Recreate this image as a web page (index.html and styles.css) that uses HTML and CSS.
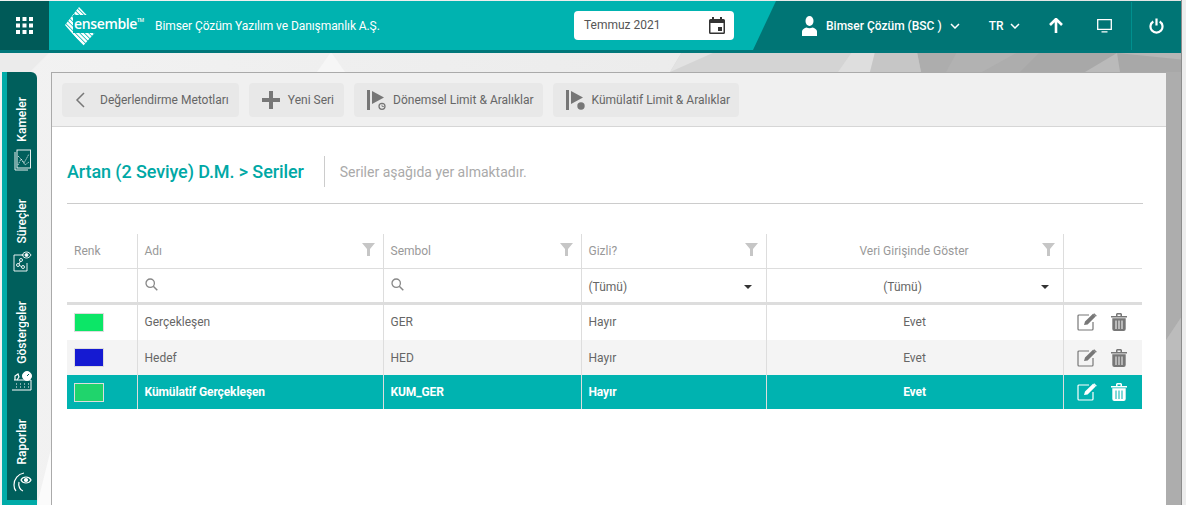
FILE: index.html
```html
<!DOCTYPE html>
<html lang="tr">
<head>
<meta charset="utf-8">
<title>Seriler</title>
<link rel="stylesheet" href="styles.css">
</head>
<body>
<svg class="backdrop" viewBox="0 0 1186 505" preserveAspectRatio="none" aria-hidden="true">
  <defs><linearGradient id="bg" x1="0" x2="1"><stop offset="0" stop-color="#f2f2f2"/><stop offset=".56" stop-color="#ececec"/><stop offset="1" stop-color="#e4e4e4"/></linearGradient></defs>
  <rect width="1186" height="505" fill="url(#bg)"/>
  <polygon points="0,52 50,52 30,72 0,72" fill="#ebebeb"/>
  <polygon points="331,52 345,72 317,72" fill="#f6f6f6"/>
  <polygon points="682,52 1186,52 1186,505 1166,505 1166,72 670,72" fill="#d4d4d4"/>
  <polygon points="682,52 715,52 670,72" fill="#e2e2e2"/>
  <polygon points="852,52 875,52 870,72 838,72" fill="#dedede"/>
  <polygon points="875,52 917,52 921,72 870,72" fill="#c6c6c6"/>
  <polygon points="917,52 1186,52 1186,505 1166,505 1166,72 921,72" fill="#adadad"/>
  <polygon points="957,52 1018,52 982,72 946,72" fill="#b2b2b2"/>
  <polygon points="1040,52 1186,52 1186,72 1020,72" fill="#a8a8a8"/>
  <polygon points="1117,53 1120,72 1085,72" fill="#bababa"/>
  <polygon points="1117,53 1186,60 1186,52 1117,52" fill="#b6b6b6"/>
  <polygon points="1166,340 1186,310 1186,360 1166,360" fill="#bcbcbc"/>
  <polygon points="37,505 52,445 52,505" fill="#fbfbfb"/>
</svg>

<header class="topbar">
  <button class="apps" aria-label="Uygulamalar">
    <svg width="17" height="17" viewBox="0 0 17 17" fill="#fff"><rect width="4" height="4"/><rect x="6.500" width="4" height="4"/><rect x="13" width="4" height="4"/><rect y="6.500" width="4" height="4"/><rect x="6.500" y="6.500" width="4" height="4"/><rect x="13" y="6.500" width="4" height="4"/><rect y="13" width="4" height="4"/><rect x="6.500" y="13" width="4" height="4"/><rect x="13" y="13" width="4" height="4"/></svg>
  </button>
  <div class="brand">
    <div class="logo">
      <svg class="logo-mark" width="48" height="44" viewBox="0 0 48 44" aria-hidden="true">
        <defs><clipPath id="dia"><polygon points="2,21 16,3 36,24 20,42"/></clipPath></defs>
        <g clip-path="url(#dia)" stroke="#fff" stroke-width="2.400" fill="none">
          <path d="M-19 0L31 50M-14.500 0L35.500 50M-10 0L40 50M-5.500 0L44.500 50M-1 0L49 50M3.500 0L53.500 50M8 0L58 50M12.500 0L62.500 50"/>
        </g>
      </svg>
      <span class="logo-word">ensemble<sup>TM</sup></span>
    </div>
    <span class="company">Bimser Çözüm Yazılım ve Danışmanlık A.Ş.</span>
    <div class="date-box">
      <span>Temmuz 2021</span>
      <svg width="16" height="17" viewBox="0 0 16 17"><path fill-rule="evenodd" d="M3 0h2v2h6V0h2v2h1.500A1.500 1.500 0 0 1 16 3.500V15.500A1.500 1.500 0 0 1 14.500 17H1.500A1.500 1.500 0 0 1 0 15.500V3.500A1.500 1.500 0 0 1 1.500 2H3zM1.500 6v9.500h13V6z" fill="#333"/><rect x="9" y="10" width="4" height="4" fill="#333"/></svg>
    </div>
  </div>
  <div class="user-area">
    <div class="nav-item user">
      <svg width="15" height="20" viewBox="0 0 15 20" fill="#fff"><ellipse cx="7.500" cy="5" rx="4" ry="5"/><path d="M0 20v-4.500c0-2 2.500-3.500 4.500-4 1.800 1 4.200 1 6 0 2 .5 4.500 2 4.500 4V20z"/></svg>
      <span>Bimser Çözüm (BSC )</span>
      <svg class="chev" width="10" height="6" viewBox="0 0 10 6"><path d="M1 1l4 4 4-4" fill="none" stroke="#fff" stroke-width="1.500"/></svg>
    </div>
    <div class="nav-item lang">
      <span>TR</span>
      <svg class="chev" width="10" height="6" viewBox="0 0 10 6"><path d="M1 1l4 4 4-4" fill="none" stroke="#fff" stroke-width="1.500"/></svg>
    </div>
    <svg class="up" width="14" height="15" viewBox="0 0 14 15"><path d="M7 1v14M1 7l6-6 6 6" fill="none" stroke="#fff" stroke-width="2.600"/></svg>
    <svg class="monitor" width="15" height="14" viewBox="0 0 15 14"><path d="M.7.700h13.600v9.600H.7zM4.500 12.800h6" fill="none" stroke="#fff" stroke-width="1.300"/></svg>
    <div class="power">
      <svg width="15" height="16" viewBox="0 0 15 16"><path d="M4.300 3.500a6 6 0 1 0 6.400 0M7.500 0.500v7" fill="none" stroke="#fff" stroke-width="2.200"/></svg>
    </div>
  </div>
</header>

<div class="stage">
  <nav class="sidetabs">
    <a class="tab tab-a"><span>Kameler</span>
      <svg width="17" height="22" viewBox="0 0 17 22" fill="none" stroke="#fff" stroke-width=".9"><rect x="3" y="1" width="13.500" height="18"/><path d="M1 3v18h13"/><path d="M4 16l3-6 3 4 5-9M4 7l4 4 3 5 4-3" stroke-width=".7" stroke-dasharray="1.500 .7"/></svg>
    </a>
    <a class="tab tab-b"><span>Süreçler</span>
      <svg width="19" height="21" viewBox="0 0 19 21" fill="none" stroke="#fff" stroke-width=".9"><path d="M11 4H1v16h13v-8"/><circle cx="5" cy="14" r="1.500"/><circle cx="10" cy="16" r="1.500"/><circle cx="8" cy="9" r="1.500"/><path d="M6 13l1.500-3M6.500 14.500l2 1"/><path d="M9 4c2-4 7-4 9 0-2 4-7 4-9 0z"/><circle cx="13.500" cy="4" r="1.500" fill="#fff"/></svg>
    </a>
    <a class="tab tab-c"><span>Göstergeler</span>
      <svg width="22" height="20" viewBox="0 0 22 20" fill="none" stroke="#fff" stroke-width="1"><path d="M3 9h17v10H1"/><path d="M5 13h1M9 13h1M13 13h1M17 13h1M5 16h1M9 16h1M13 16h1M17 16h1" stroke-width="1.200"/><circle cx="16" cy="5" r="4.500" fill="#fff"/><path d="M16 5l2-2" stroke="#005f5c"/><path d="M4 9V5l3-2 1 3-2 3" stroke-width="1.200"/></svg>
    </a>
    <a class="tab tab-d"><span>Raporlar</span>
      <svg width="19" height="20" viewBox="0 0 19 20" fill="none" stroke="#fff" stroke-width="1.200"><path d="M11 1C5 2 1 7 1 13c0 3 1 5 2 6M10 19c-3-1-5-5-4-9"/><path d="M8 8c2-4 8-4 10 0-2 4-8 4-10 0z"/><circle cx="13" cy="8" r="1.500" fill="#fff"/></svg>
    </a>
  </nav>

  <main class="panel">
    <div class="toolbar">
      <button class="tool tool-back">
        <svg class="tool-ico back" width="10" height="16" viewBox="0 0 10 16"><path d="M9 1L2 8l7 7" fill="none" stroke="#777" stroke-width="1.500"/></svg>
        <span>Değerlendirme Metotları</span>
      </button>
      <button class="tool tool-new">
        <svg width="18" height="18" viewBox="0 0 18 18"><path d="M0 7h7V0h4v7h7v4h-7v7H7v-7H0z" fill="#777"/></svg>
        <span>Yeni Seri</span>
      </button>
      <button class="tool tool-flag">
        <svg width="20" height="20" viewBox="0 0 20 20" fill="#777"><rect width="3" height="20"/><path d="M5 1l12 6.500L5 14z"/><circle cx="15" cy="16.300" r="3" fill="none" stroke="#777" stroke-width="1.300"/><path d="M15 14.500v2h2" fill="none" stroke="#777" stroke-width=".8"/></svg>
        <span>Dönemsel Limit &amp; Aralıklar</span>
      </button>
      <button class="tool tool-flag">
        <svg width="20" height="20" viewBox="0 0 20 20" fill="#777"><rect width="3" height="20"/><path d="M5 1l12 6.500L5 14z"/><circle cx="15" cy="16" r="3.700"/></svg>
        <span>Kümülatif Limit &amp; Aralıklar</span>
      </button>
    </div>

    <div class="content">
      <div class="heading">
        <h1>Artan (2 Seviye) D.M. &gt; Seriler</h1>
        <p>Seriler aşağıda yer almaktadır.</p>
      </div>

      <table class="grid">
        <colgroup>
          <col class="c-color"><col class="c-name"><col class="c-sym"><col class="c-hid"><col class="c-show"><col class="c-act">
        </colgroup>
        <thead>
          <tr class="head">
            <th>Renk</th>
            <th><div class="th-in">Adı<svg class="funnel" viewBox="0 0 13 13"><path d="M0 0h13L8 6v7H5V6z"/></svg></div></th>
            <th><div class="th-in">Sembol<svg class="funnel" viewBox="0 0 13 13"><path d="M0 0h13L8 6v7H5V6z"/></svg></div></th>
            <th><div class="th-in">Gizli?<svg class="funnel" viewBox="0 0 13 13"><path d="M0 0h13L8 6v7H5V6z"/></svg></div></th>
            <th class="center"><div class="th-in th-center">Veri Girişinde Göster<svg class="funnel" viewBox="0 0 13 13"><path d="M0 0h13L8 6v7H5V6z"/></svg></div></th>
            <th></th>
          </tr>
          <tr class="filter">
            <td></td>
            <td><svg class="search" width="13" height="13" viewBox="0 0 13 13"><circle cx="5.200" cy="5.200" r="4.200" fill="none" stroke="#888" stroke-width="1.300"/><path d="M8.300 8.300l4 4" stroke="#888" stroke-width="1.500"/></svg></td>
            <td><svg class="search" width="13" height="13" viewBox="0 0 13 13"><circle cx="5.200" cy="5.200" r="4.200" fill="none" stroke="#888" stroke-width="1.300"/><path d="M8.300 8.300l4 4" stroke="#888" stroke-width="1.500"/></svg></td>
            <td><div class="select">(Tümü)<i class="caret"></i></div></td>
            <td><div class="select select-c"><span>(Tümü)</span><i class="caret"></i></div></td>
            <td></td>
          </tr>
        </thead>
        <tbody>
          <tr class="r1">
            <td><i class="swatch s-green"></i></td><td>Gerçekleşen</td><td>GER</td><td>Hayır</td><td class="center">Evet</td>
            <td class="actions">
              <svg class="act" width="21" height="18" viewBox="0 0 21 18"><path d="M12 2H2a1 1 0 0 0-1 1v13a1 1 0 0 0 1 1h13a1 1 0 0 0 1-1V9" fill="none" stroke="currentColor" stroke-width="1.200"/><path d="M7 12l1-3.500L16 .8l2.600 2.600-8 8z M17.200.2l2.600 2.600-.8.8-2.600-2.600z" fill="currentColor"/></svg>
              <svg class="act" width="16" height="18" viewBox="0 0 16 18"><path d="M0 3h16v1.600H0zM5 3V1l1-1h4l1 1v2H9.500V1.500h-3V3zM1.300 5.200h13.400V16a2 2 0 0 1-2 2H3.300a2 2 0 0 1-2-2zM4.500 7.500V16h1V7.500zM7.500 7.500V16h1V7.500zM10.500 7.500V16h1V7.500z" fill="currentColor" fill-rule="evenodd"/></svg>
            </td>
          </tr>
          <tr class="alt">
            <td><i class="swatch s-blue"></i></td><td>Hedef</td><td>HED</td><td>Hayır</td><td class="center">Evet</td>
            <td class="actions">
              <svg class="act" width="21" height="18" viewBox="0 0 21 18"><path d="M12 2H2a1 1 0 0 0-1 1v13a1 1 0 0 0 1 1h13a1 1 0 0 0 1-1V9" fill="none" stroke="currentColor" stroke-width="1.200"/><path d="M7 12l1-3.500L16 .8l2.600 2.600-8 8z M17.200.2l2.600 2.600-.8.8-2.600-2.600z" fill="currentColor"/></svg>
              <svg class="act" width="16" height="18" viewBox="0 0 16 18"><path d="M0 3h16v1.600H0zM5 3V1l1-1h4l1 1v2H9.500V1.500h-3V3zM1.300 5.200h13.400V16a2 2 0 0 1-2 2H3.300a2 2 0 0 1-2-2zM4.500 7.500V16h1V7.500zM7.500 7.500V16h1V7.500zM10.500 7.500V16h1V7.500z" fill="currentColor" fill-rule="evenodd"/></svg>
            </td>
          </tr>
          <tr class="selected">
            <td><i class="swatch s-lime"></i></td><td>Kümülatif Gerçekleşen</td><td>KUM_GER</td><td>Hayır</td><td class="center">Evet</td>
            <td class="actions">
              <svg class="act" width="21" height="18" viewBox="0 0 21 18"><path d="M12 2H2a1 1 0 0 0-1 1v13a1 1 0 0 0 1 1h13a1 1 0 0 0 1-1V9" fill="none" stroke="currentColor" stroke-width="1.200"/><path d="M7 12l1-3.500L16 .8l2.600 2.600-8 8z M17.200.2l2.600 2.600-.8.8-2.600-2.600z" fill="currentColor"/></svg>
              <svg class="act" width="16" height="18" viewBox="0 0 16 18"><path d="M0 3h16v1.600H0zM5 3V1l1-1h4l1 1v2H9.500V1.500h-3V3zM1.300 5.200h13.400V16a2 2 0 0 1-2 2H3.300a2 2 0 0 1-2-2zM4.500 7.500V16h1V7.500zM7.500 7.500V16h1V7.500zM10.500 7.500V16h1V7.500z" fill="currentColor" fill-rule="evenodd"/></svg>
            </td>
          </tr>
        </tbody>
      </table>
    </div>
  </main>
</div>
<div class="edge"></div>
</body>
</html>
```

FILE: styles.css
```css
* { box-sizing: border-box; }
html, body { height: 100%; }
body {
  margin: 0;
  height: 505px;
  overflow: hidden;
  font-family: Roboto, "Liberation Sans", sans-serif;
  font-size: 12px;
  color: #666;
  position: relative;
}
.backdrop { position: absolute; inset: 0; width: 100%; height: 100%; z-index: -1; }
.edge {
  position: absolute;
  top: 0;
  right: 0;
  bottom: 0;
  width: 5px;
  background: #ededed;
  border-left: 1px solid #8c8c8c;
}

/* top bar */
.topbar {
  display: flex;
  height: 52px;
  margin-top: 1px;
  border-bottom: 3px solid #00777a;
  background: #007575;
  color: #fff;
}
.apps {
  flex: 0 0 49px;
  border: 0;
  padding: 0;
  background: #005a58;
  display: flex;
  align-items: center;
  justify-content: center;
}
.brand {
  flex: 0 0 727px;
  display: flex;
  align-items: center;
  background: #00b3b0;
  clip-path: polygon(0 0, 100% 0, 704px 100%, 0 100%);
  padding-left: 14px;
}
.logo { position: relative; width: 79px; height: 48px; flex: none; }
.logo-mark { position: absolute; left: 0; top: 2px; }
.logo-word {
  position: absolute;
  left: 10px;
  top: 13px;
  font-family: "Open Sans", sans-serif;
  font-size: 14px;
  font-weight: 600;
  letter-spacing: -.35px;
  color: #fff;
  background: #00b3b0;
  padding: 0 1px;
  line-height: 18px;
  white-space: nowrap;
}
.logo-word sup { font-size: 5px; vertical-align: 7px; line-height: 0; }
.company { margin-left: 13px; width: 419px; font-size: 12px; letter-spacing: -.08px; color: #fff; white-space: nowrap; }
.date-box {
  width: 160px;
  height: 29px;
  margin-top: -1px;
  background: #fff;
  border-radius: 4px;
  color: #555;
  display: flex;
  align-items: center;
  justify-content: space-between;
  padding: 0 9px 0 10px;
  font-size: 12px;
}
.user-area { flex: 1; display: flex; align-items: center; position: relative; padding-left: 26px; }
.nav-item { display: flex; align-items: center; font-weight: 500; font-size: 12px; }
.user span { margin-left: 9px; }
.user .chev { margin-left: 8px; }
.lang { margin-left: 29px; }
.lang .chev { margin-left: 6px; }
.up { margin-left: 29px; }
.monitor { margin-left: 34px; }
.power {
  margin-left: 19px;
  width: 50px;
  height: 48px;
  border-left: 1px solid #00908e;
  display: flex;
  align-items: center;
  justify-content: center;
}

/* stage */
.stage { display: flex; height: 452px; padding-top: 19px; }
.sidetabs {
  flex: 0 0 35px;
  margin-left: 2px;
  background: #005f5c;
  border-left: 5px solid #00aba8;
  border-top-right-radius: 6px;
  display: flex;
  flex-direction: column;
  height: 433px;
  position: relative;
}
.sidetabs::after {
  content: "";
  position: absolute;
  left: -5px;
  right: 0;
  bottom: 0;
  height: 5px;
  background: #00aba8;
}
.tab {
  display: flex;
  flex-direction: column;
  align-items: center;
  color: #fff;
  font-weight: 500;
  font-size: 12px;
}
.tab span { writing-mode: vertical-rl; transform: rotate(180deg); line-height: 14px; }
.tab svg { margin-top: 7px; }
.tab-a { margin-top: 25px; height: 100px; }
.tab-b { margin-top: 2px; height: 100px; }
.tab-c { margin-top: 2px; height: 118px; }
.tab-d { margin-top: 0; }
.panel {
  width: 1115px;
  margin-left: 14px;
  height: 433px;
  background: #fff;
  border-top: 1px solid #aaa;
  border-left: 1px solid #aaa;
}

/* toolbar */
.toolbar {
  height: 54px;
  display: flex;
  align-items: center;
  gap: 10px;
  padding: 0 0 0 10px;
  background: #f0f0f0;
  border-bottom: 1px solid #d6d6d6;
}
.tool {
  height: 34px;
  border: 0;
  border-radius: 4px;
  background: #e8e8e8;
  color: #666;
  font: 12px Roboto, sans-serif;
  display: flex;
  align-items: center;
  padding: 0 10px 0 13px;
  white-space: nowrap;
}
.tool .back { margin-right: 15px; }
.tool-new svg { margin-right: 8px; }
.tool-flag { padding-right: 9px; }
.tool-flag svg { margin-right: 6px; }

/* content */
.content { padding: 29px 23px 0 15px; }
.heading {
  display: flex;
  align-items: center;
  height: 48px;
  padding-bottom: 16px;
  border-bottom: 1px solid #ccc;
  margin-bottom: 30px;
}
.heading h1 {
  margin: 0;
  padding-right: 20px;
  height: 31px;
  line-height: 31px;
  border-right: 1px solid #ccc;
  font-size: 18px;
  font-weight: 500;
  letter-spacing: -.1px;
  color: #00a8a5;
  white-space: nowrap;
}
.heading p { margin: 0 0 0 15px; font-size: 14px; color: #aaa; }

/* grid */
.grid { width: 1075px; border-collapse: collapse; table-layout: fixed; font-size: 12px; }
.c-color { width: 70px; }
.c-name { width: 246px; }
.c-sym { width: 198px; }
.c-hid { width: 185px; }
.c-show { width: 297px; }
.c-act { width: 79px; }
.grid th, .grid td {
  padding: 0 7px;
  border-left: 1px solid #ddd;
  text-align: left;
  font-weight: 400;
  white-space: nowrap;
}
.grid tr > :first-child { border-left: 0; }
.grid .center { text-align: center; }
.head th { height: 34px; color: #999; border-bottom: 1px solid #ddd; }
.th-in { display: flex; align-items: center; justify-content: space-between; position: relative; padding-right: 1px; }
.th-center { justify-content: center; }
.funnel { width: 13px; height: 13px; fill: #c6c6c6; margin-top: -2px; }
.th-center .funnel { position: absolute; right: 1px; }
.filter td { height: 35px; border-bottom: 3px solid #ddd; color: #666; }
.search { display: block; margin-top: -1px; }
.select { display: flex; align-items: center; justify-content: space-between; padding-right: 7px; position: relative; padding-top: 3px; }
.select-c { justify-content: center; padding-right: 24px; }
.select-c .caret { position: absolute; right: 7px; }
.caret { border: 4px solid transparent; border-top: 4px solid #333; border-bottom: 0; width: 0; height: 0; }
tbody td { height: 35px; color: #666; }
.grid .r1 td { height: 37px; }
.grid .selected td { height: 34px; }
.alt td { background: #f4f4f4; }
.selected td { background: #00b3b0; color: #fff; font-weight: 700; letter-spacing: -.1px; }
.swatch { display: block; width: 30px; height: 19px; border: 1px solid #ddd; }
.s-green { background: #0ce667; }
.s-blue { background: #151ad2; }
.s-lime { background: #20d46c; }
.grid .actions { padding: 0 0 0 13px; color: #777; }
.grid .selected .actions { color: #fff; }
.act { vertical-align: middle; }
.act + .act { margin-left: 11px; }
```
